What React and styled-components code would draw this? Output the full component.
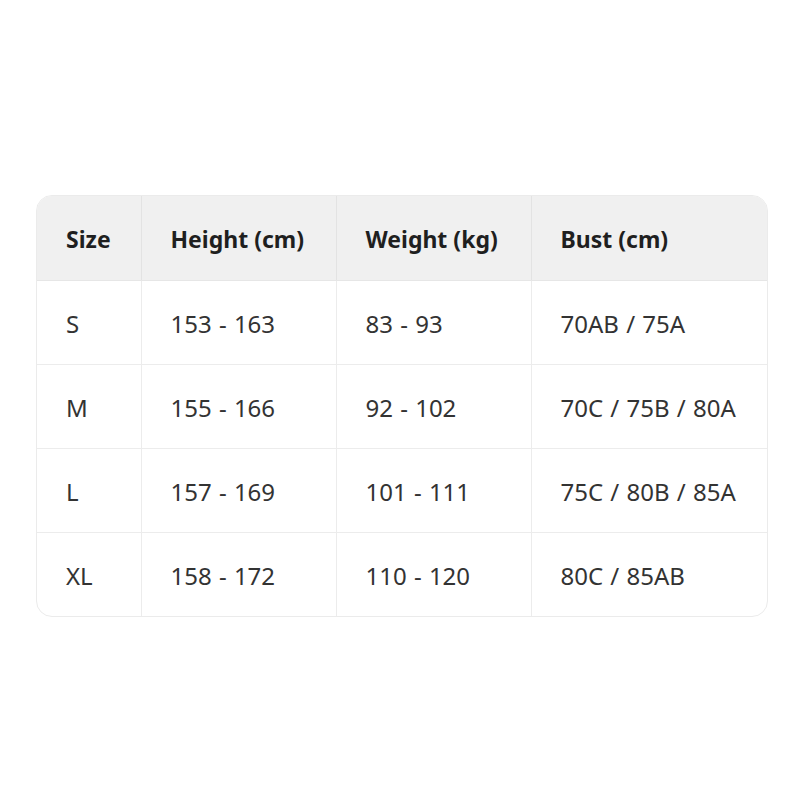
import React from 'react'
import styled, { createGlobalStyle } from 'styled-components'

const GlobalStyle = createGlobalStyle`
  body {
    margin: 0;
    background: #ffffff;
    font-family: "Noto Sans", "Open Sans", sans-serif;
  }
`

const Page = styled.div`
  padding: 195px 32px 0 36px;
`

const Card = styled.div`
  border: 1px solid #ebebeb;
  border-radius: 16px;
  overflow: hidden;
  width: 730px;
`

const Table = styled.table`
  width: 100%;
  border-collapse: collapse;
  table-layout: fixed;
`

const HeadCell = styled.th`
  box-sizing: border-box;
  background: #f0f0f0;
  color: #1f1f1f;
  font-weight: 700;
  font-size: 23px;
  text-align: left;
  height: 84px;
  padding: 3px 0 0 29px;
  border-left: 1px solid #e3e3e3;
  border-bottom: 1px solid #e6e6e6;
  width: ${p => p.$w}px;
  white-space: nowrap;
  &:first-child { border-left: none; }
`

const Cell = styled.td`
  box-sizing: border-box;
  color: #333333;
  font-size: 24px;
  word-spacing: 1px;
  height: 84px;
  padding: 2px 0 0 29px;
  border-left: 1px solid #ececec;
  border-top: 1px solid #ececec;
  white-space: nowrap;
  &:first-child { border-left: none; }
`

const Row = styled.tr`
  &:nth-child(1) td { border-top: none; }
`

const columns = [
  { label: 'Size', w: 104 },
  { label: 'Height (cm)', w: 195 },
  { label: 'Weight (kg)', w: 195 },
  { label: 'Bust (cm)', w: 236 },
]

const rows = [
  ['S', '153 - 163', '83 - 93', '70AB / 75A'],
  ['M', '155 - 166', '92 - 102', '70C / 75B / 80A'],
  ['L', '157 - 169', '101 - 111', '75C / 80B / 85A'],
  ['XL', '158 - 172', '110 - 120', '80C / 85AB'],
]

export default function App() {
  return (
    <Page>
      <GlobalStyle />
      <Card>
        <Table>
          <thead>
            <tr>
              {columns.map(c => (
                <HeadCell key={c.label} $w={c.w}>{c.label}</HeadCell>
              ))}
            </tr>
          </thead>
          <tbody>
            {rows.map(r => (
              <Row key={r[0]}>
                {r.map((v, i) => <Cell key={i}>{v}</Cell>)}
              </Row>
            ))}
          </tbody>
        </Table>
      </Card>
    </Page>
  )
}
